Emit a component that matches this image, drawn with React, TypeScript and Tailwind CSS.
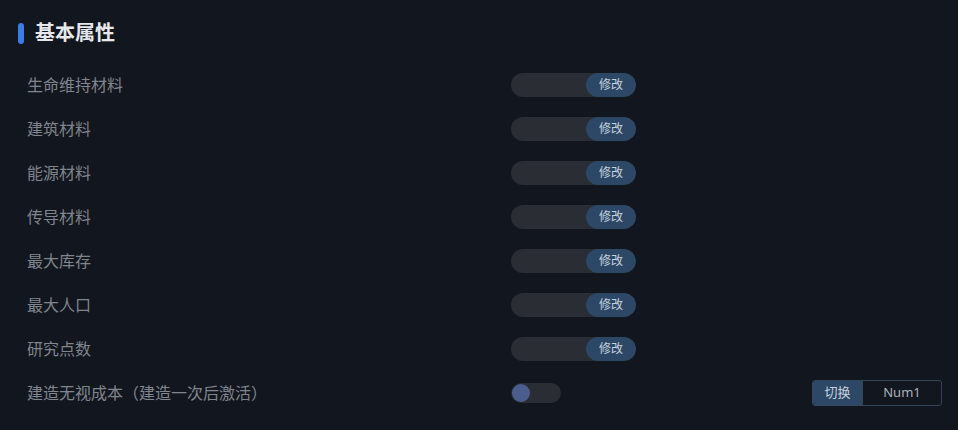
import React from "react";

const rows = ["生命维持材料", "建筑材料", "能源材料", "传导材料", "最大库存", "最大人口", "研究点数"];

export default function App() {
  return (
    <div
      className="w-[958px] h-[430px] bg-[#12161e] overflow-hidden"
      style={{ fontFamily: '"Noto Sans", "Noto Sans CJK SC", sans-serif' }}
    >
      <div className="flex items-center pl-[18px] pt-[12px] h-[42px] mb-[9px] box-content">
        <div className="w-[6px] h-[21px] rounded-full bg-[#3b7de8]" />
        <div className="ml-[11px] text-[20px] font-bold text-[#e6e8eb] leading-none">基本属性</div>
      </div>
      <div className="flex flex-col">
        {rows.map((r, i) => (
          <div key={i} className="flex items-center h-[44px] pl-[27px]">
            <div className="w-[484px] text-[16px] text-[#80858e]">{r}</div>
            <div className="flex w-[125px] h-[24px] rounded-full bg-[#2a2d33] overflow-hidden">
              <div className="flex-1" />
              <button className="w-[50px] h-full rounded-full bg-[#2c4866] text-[12px] text-[#c6d2df] flex items-center justify-center">
                修改
              </button>
            </div>
          </div>
        ))}
        <div className="flex items-center h-[44px] pl-[27px] pr-[16px]">
          <div className="w-[484px] text-[16px] text-[#80858e]">建造无视成本（建造一次后激活）</div>
          <div className="w-[50px] h-[20px] rounded-full bg-[#2a2d33] flex items-center px-[1px]">
            <div className="w-[18px] h-[18px] rounded-full bg-[#4a5d8c]" />
          </div>
          <div className="flex-1" />
          <div className="flex h-[26px] rounded-[3px] border border-[#34475a] overflow-hidden">
            <div className="w-[49px] bg-[#2c4866] text-[13px] text-[#c6d2df] flex items-center justify-center">切换</div>
            <div className="w-[79px] border-l border-[#34475a] text-[13px] text-[#a9b2bc] flex items-center justify-center">Num1</div>
          </div>
        </div>
      </div>
    </div>
  );
}
